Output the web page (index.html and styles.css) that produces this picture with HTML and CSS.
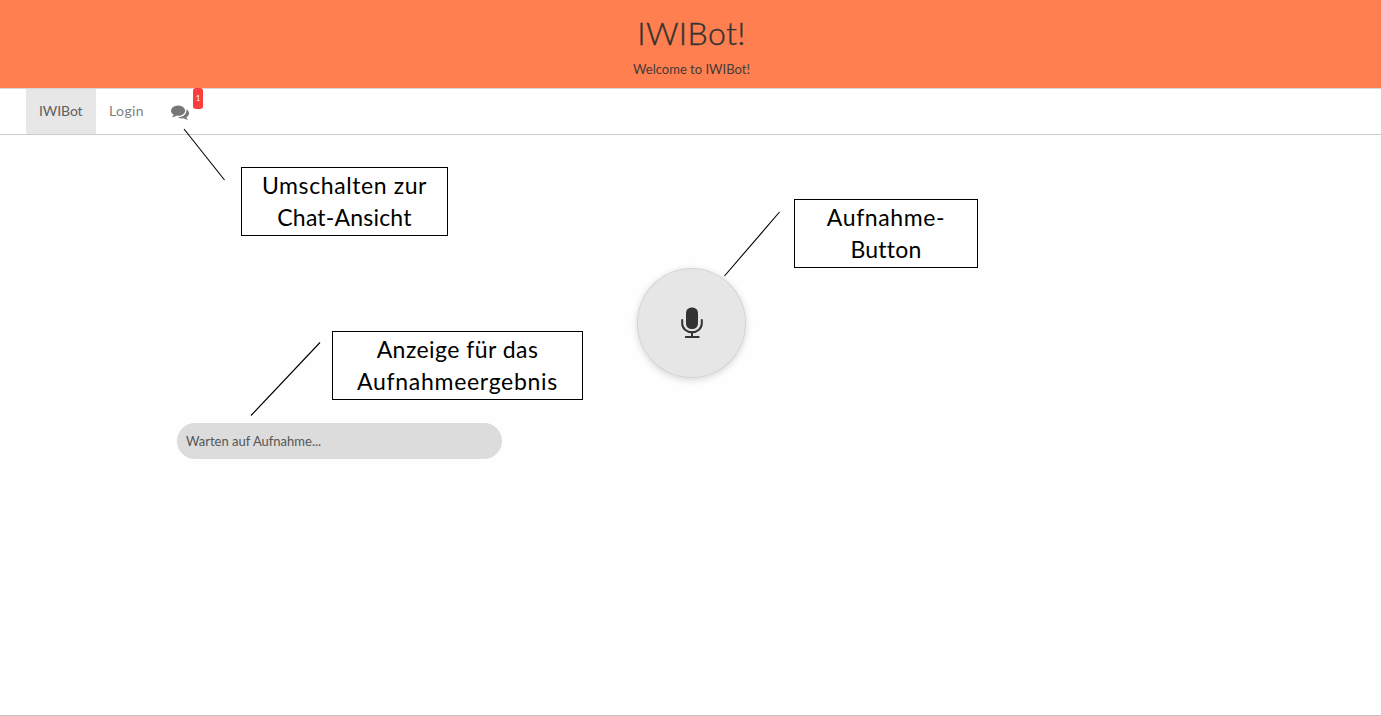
FILE: index.html
```html
<!DOCTYPE html>
<html lang="de">
<head>
<meta charset="utf-8">
<title>IWIBot!</title>
<link rel="stylesheet" href="styles.css">
</head>
<body>
<div class="page">
  <header class="banner">
    <h1 class="banner-title">IWIBot!</h1>
    <p class="banner-text">Welcome to IWIBot!</p>
  </header>
  <nav class="nav">
    <a class="nav-item nav-item-active"><span class="nav-brand">IWIBot</span></a>
    <a class="nav-item"><span class="nav-login">Login</span></a>
    <a class="nav-item nav-chat">
      <svg class="chat-icon" viewBox="0 0 1792 1792"><path fill="#777" d="M1408 768q0 139-94 257t-256.500 186.500-353.500 68.500q-86 0-176-16-124 88-278 128-36 9-86 16h-3q-11 0-20.500-8t-11.500-21q-1-3-1-6.500t.5-6.500 2-6l2.500-5 3.500-5.500 4-5 4.500-5 4-4.500q5-6 23-25t26-29.500 22.500-29 25-38.500 20.500-44q-124-72-195-177t-71-224q0-139 94-257t256.500-186.500 353.500-68.500 353.500 68.500 256.500 186.500 94 257zm384 256q0 120-71 224.500t-195 176.500q10 24 20.500 44t25 38.500 22.500 29 26 29.500 23 25q1 1 4 4.500t4.500 5 4 5 3.500 5.500l2.500 5 2 6 .5 6.500-1 6.500q-3 14-13 22t-22 7q-50-7-86-16-154-40-278-128-90 16-176 16-271 0-472-132 58 4 88 4 161 0 309-45t264-129q125-92 192-212t67-254q0-77-23-152 129 71 204 178t75 230z"/></svg>
      <span class="badge">1</span>
    </a>
  </nav>
  <main class="main">
    <button class="record">
      <svg class="mic-icon" viewBox="0 0 24 32">
        <rect x="6" y="0.500" width="12" height="21.500" rx="5.500" fill="#333"/>
        <path d="M2.200 13v3.500a9.800 8.700 0 0 0 19.600 0v-3.500M12 25v5M5.800 30h12.900" fill="none" stroke="#333" stroke-width="2" stroke-linecap="round"/>
      </svg>
    </button>
    <div class="result"><span class="result-text">Warten auf Aufnahme...</span></div>
  </main>
  <svg class="leaders" viewBox="0 0 1381 716">
    <path d="M184 129L224.500 180M779.500 212L724.500 276M320 342.500L251 415.500" stroke="#000" stroke-width="1.100" fill="none"/>
  </svg>
  <div class="callout callout-chat"><span class="spaced-wide">Umschalten zur</span><span class="spaced-tight">Chat-Ansicht</span></div>
  <div class="callout callout-record"><span class="spaced-wide">Aufnahme-</span><span class="spaced-tight">Button</span></div>
  <div class="callout callout-result"><span class="spaced-medium">Anzeige für das</span><span class="spaced-widest">Aufnahmeergebnis</span></div>
</div>
</body>
</html>
```
FILE: styles.css
```css
* { box-sizing: border-box; }
body { margin: 0; background: #fefefe; color: #333; font-family: Lato, "Open Sans", sans-serif; }
.page { position: relative; height: 716px; overflow: hidden; border-bottom: 1px solid #c4c4c4; display: flex; flex-direction: column; }
.banner { height: 88px; background: #ff7f50; padding: 13px 0 0 2px; display: flex; flex-direction: column; align-items: center; flex: none; }
.banner-title { margin: 0; font-size: 32px; line-height: 40px; font-weight: 300; letter-spacing: 0.400px; -webkit-text-stroke: 0.400px #333; }
.banner-text { margin: 6px 0 0; font-size: 13px; line-height: 20px; color: #443a36; white-space: nowrap; }
.nav { height: 47px; flex: none; display: flex; padding-left: 26px; border-top: 1px solid #d8d8d8; border-bottom: 1px solid #ccc; background: #fff; }
.nav-item { height: 45px; padding: 0 13px 2px; display: flex; align-items: center; font-size: 14px; line-height: 20px; color: #808080; }
.nav-item-active { width: 70px; background: #e7e7e7; color: #606060; }
.nav-brand { letter-spacing: -0.100px; }
.nav-login { letter-spacing: 0.400px; }
.nav-chat { position: relative; padding-left: 14px; }
.chat-icon { width: 18px; height: 18px; display: block; margin-top: 2px; }
.badge { position: absolute; left: 36px; top: -1px; width: 10px; height: 21px; border-radius: 3px; background: #fa3e3e; color: #fff; font-size: 8px; line-height: 21px; text-align: center; }
.main { flex: 1; display: flex; flex-direction: column; align-items: center; padding-top: 133px; }
.record { width: 109px; height: 110px; margin-left: 2px; padding: 0; flex: none; border: 1px solid #d5d5d5; border-radius: 50%; background: #e6e6e6; box-shadow: 0 2px 7px rgba(0, 0, 0, 0.160); display: flex; align-items: center; justify-content: center; }
.mic-icon { width: 24px; height: 32px; display: block; }
.result { align-self: flex-start; width: 325px; height: 36px; margin: 45px 0 0 177px; padding-left: 9px; border-radius: 18px; background: #dcdcdc; color: #555; font-size: 13px; line-height: 37px; }
.leaders { position: absolute; left: 0; top: 0; width: 1381px; height: 716px; pointer-events: none; }
.callout { position: absolute; height: 69px; padding-top: 1px; border: 1px solid #000; background: #fff; color: #000; font-size: 23px; line-height: 32px; font-variant-ligatures: none; display: flex; flex-direction: column; align-items: center; white-space: nowrap; }
.callout-chat { left: 241px; top: 167px; width: 207px; }
.callout-record { left: 794px; top: 199px; width: 184px; }
.callout-result { left: 332px; top: 331px; width: 251px; }
.spaced-tight { letter-spacing: 0.200px; }
.spaced-medium { letter-spacing: 0.450px; }
.spaced-wide { letter-spacing: 0.600px; }
.spaced-widest { letter-spacing: 0.700px; }
```
